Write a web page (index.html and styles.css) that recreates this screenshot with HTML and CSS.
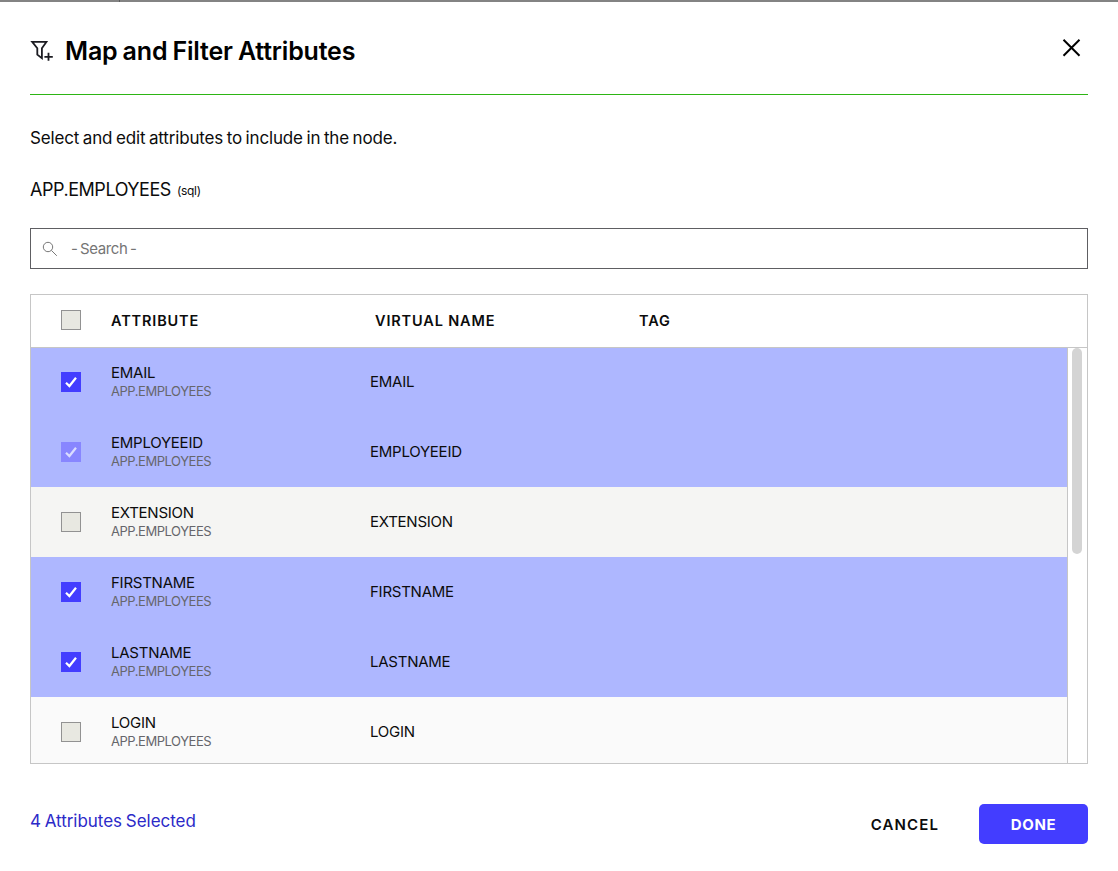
FILE: index.html
```html
<!DOCTYPE html>
<html lang="en">
<head>
<meta charset="utf-8">
<title>Map and Filter Attributes</title>
<link rel="stylesheet" href="styles.css">
</head>
<body>
<div class="backdrop-edge"><span class="edge-left"></span></div>
<main class="dialog">
  <header class="dialog-header">
    <svg class="filter-icon" width="24" height="22" viewBox="0 0 24 22" fill="none" stroke="#1c1c22" stroke-width="1.8"><path d="M2.2 1.9H16.4L11.9 8.2V18.2L7.3 14.6V8.2L2.2 1.9Z"/><path d="M18.5 12.8V20.8M14.4 16.8H22.8"/></svg>
    <h1 class="title">Map and Filter Attributes</h1>
    <svg class="close-icon" width="20" height="20" viewBox="0 0 20 20" fill="none" stroke="#000" stroke-width="2"><path d="M1.5 1.8L17.5 17.8M17.5 1.8L1.5 17.8"/></svg>
  </header>
  <p class="intro">Select and edit attributes to include in the node.</p>
  <div class="source"><span class="source-name">APP.EMPLOYEES</span><span class="source-type">(sql)</span></div>
  <div class="search">
    <svg width="16" height="16" viewBox="0 0 16 16" fill="none" stroke="#777" stroke-width="1"><circle cx="6" cy="6" r="4.7"/><path d="M9.4 9.4L14.8 14.8"/></svg>
    <span class="search-hint">- Search -</span>
  </div>
  <section class="table">
    <div class="table-head">
      <span class="checkbox"></span>
      <span class="head-attribute">ATTRIBUTE</span>
      <span class="head-virtual">VIRTUAL NAME</span>
      <span class="head-tag">TAG</span>
    </div>
    <div class="table-body">
      <div class="rows">
        <div class="row first selected">
          <span class="checkbox checked"><svg width="20" height="20" viewBox="0 0 20 20"><path d="M5 10.7L8.4 14L15 5.8"/></svg></span>
          <div class="attribute"><div class="name">EMAIL</div><div class="origin">APP.EMPLOYEES</div></div>
          <span class="virtual">EMAIL</span>
        </div>
        <div class="row selected">
          <span class="checkbox checked locked"><svg width="20" height="20" viewBox="0 0 20 20"><path d="M5 10.7L8.4 14L15 5.8"/></svg></span>
          <div class="attribute"><div class="name">EMPLOYEEID</div><div class="origin">APP.EMPLOYEES</div></div>
          <span class="virtual">EMPLOYEEID</span>
        </div>
        <div class="row hovered">
          <span class="checkbox"></span>
          <div class="attribute"><div class="name">EXTENSION</div><div class="origin">APP.EMPLOYEES</div></div>
          <span class="virtual">EXTENSION</span>
        </div>
        <div class="row selected">
          <span class="checkbox checked"><svg width="20" height="20" viewBox="0 0 20 20"><path d="M5 10.7L8.4 14L15 5.8"/></svg></span>
          <div class="attribute"><div class="name">FIRSTNAME</div><div class="origin">APP.EMPLOYEES</div></div>
          <span class="virtual">FIRSTNAME</span>
        </div>
        <div class="row selected">
          <span class="checkbox checked"><svg width="20" height="20" viewBox="0 0 20 20"><path d="M5 10.7L8.4 14L15 5.8"/></svg></span>
          <div class="attribute"><div class="name">LASTNAME</div><div class="origin">APP.EMPLOYEES</div></div>
          <span class="virtual">LASTNAME</span>
        </div>
        <div class="row">
          <span class="checkbox"></span>
          <div class="attribute"><div class="name">LOGIN</div><div class="origin">APP.EMPLOYEES</div></div>
          <span class="virtual">LOGIN</span>
        </div>
      </div>
      <div class="scrollbar"><div class="thumb"></div></div>
    </div>
  </section>
  <footer class="dialog-footer">
    <span class="count">4 Attributes Selected</span>
    <span class="cancel">CANCEL</span>
    <span class="done">DONE</span>
  </footer>
</main>
</body>
</html>
```
FILE: styles.css
```css
* { box-sizing: border-box; }
body {
  margin: 0;
  height: 871px;
  overflow: hidden;
  background: #fff;
  color: #0c0c0c;
  font-family: Inter, "Liberation Sans", sans-serif;
}
svg { display: block; flex: none; }
.backdrop-edge { height: 2px; background: #838383; }
.edge-left { display: block; width: 120px; height: 2px; border-right: 1px solid #5c5c5c; }
.dialog { padding: 0 30px; }
.dialog-header {
  display: flex;
  height: 93px;
  padding-top: 37px;
  border-bottom: 1px solid #2db514;
}
.filter-icon { margin-top: 1px; }
.title {
  flex: 1;
  margin: 0 0 0 11px;
  font-size: 25px;
  line-height: 25px;
  font-weight: 600;
  letter-spacing: -0.18px;
  word-spacing: -1px;
  color: #000;
  white-space: nowrap;
}
.close-icon { margin: -1px 6px 0 0; }
.intro {
  margin: 31px 0 0;
  font-size: 17px;
  line-height: 24px;
  letter-spacing: -0.16px;
  word-spacing: -1px;
}
.source {
  display: flex;
  align-items: center;
  height: 24px;
  margin-top: 27px;
}
.source-name { font-size: 18px; letter-spacing: -0.45px; }
.source-type { margin: 2px 0 0 6px; font-size: 12px; letter-spacing: -0.3px; }
.search {
  display: flex;
  align-items: center;
  height: 41px;
  margin-top: 27px;
  padding-left: 11px;
  border: 1px solid #5e5e62;
}
.search-hint { margin-left: 13px; font-size: 15px; letter-spacing: -0.4px; word-spacing: -1.3px; color: #757575; }
.table {
  height: 470px;
  margin-top: 25px;
  border: 1px solid #c6c6c6;
}
.table-head {
  display: grid;
  grid-template-columns: 50px 264px 264px 1fr;
  align-items: center;
  height: 53px;
  padding: 0 0 2px 30px;
  border-bottom: 1px solid #c6c6c6;
  font-size: 14.5px;
  font-weight: 600;
  letter-spacing: 0.85px;
}
.table-body { display: flex; height: 415px; overflow: hidden; }
.rows { flex: 1; border-right: 1px solid #c6c6c6; }
.row {
  display: grid;
  grid-template-columns: 50px 259px 1fr;
  align-items: center;
  height: 70px;
  padding-left: 30px;
  background: #fafafa;
}
.row.first { height: 69px; padding-bottom: 1px; }
.row.selected { background: #aeb7ff; }
.row.hovered { background: #f5f5f3; }
.checkbox {
  width: 20px;
  height: 20px;
  border: 1px solid #929292;
  background: #e8e8e1;
}
.checkbox.checked { border: 0; background: #433dff; }
.checkbox.locked { background: #8886ff; }
.checkbox path { fill: none; stroke: #fff; stroke-width: 2.2; }
.checkbox.locked path { stroke: #dadcff; }
.attribute { height: 38px; }
.name { font-size: 15px; line-height: 20px; letter-spacing: -0.25px; }
.origin { font-size: 13px; line-height: 16px; letter-spacing: -0.45px; color: #66666b; }
.virtual { font-size: 15px; line-height: 20px; letter-spacing: -0.25px; }
.scrollbar { width: 19px; padding-left: 4px; }
.thumb { width: 10px; height: 206px; border-radius: 5px; background: #d4d4d4; }
.dialog-footer { display: flex; margin-top: 40px; height: 40px; line-height: 41px; }
.count { flex: 1; margin-top: -3px; font-size: 17px; line-height: 40px; letter-spacing: -0.03px; word-spacing: -1px; color: #2c2ac8; }
.cancel { margin-right: 40px; font-size: 15px; font-weight: 600; letter-spacing: 1.1px; }
.done {
  width: 109px;
  border-radius: 5px;
  background: #433dff;
  color: #fff;
  font-size: 15px;
  font-weight: 700;
  letter-spacing: 0.6px;
  text-align: center;
}
```
